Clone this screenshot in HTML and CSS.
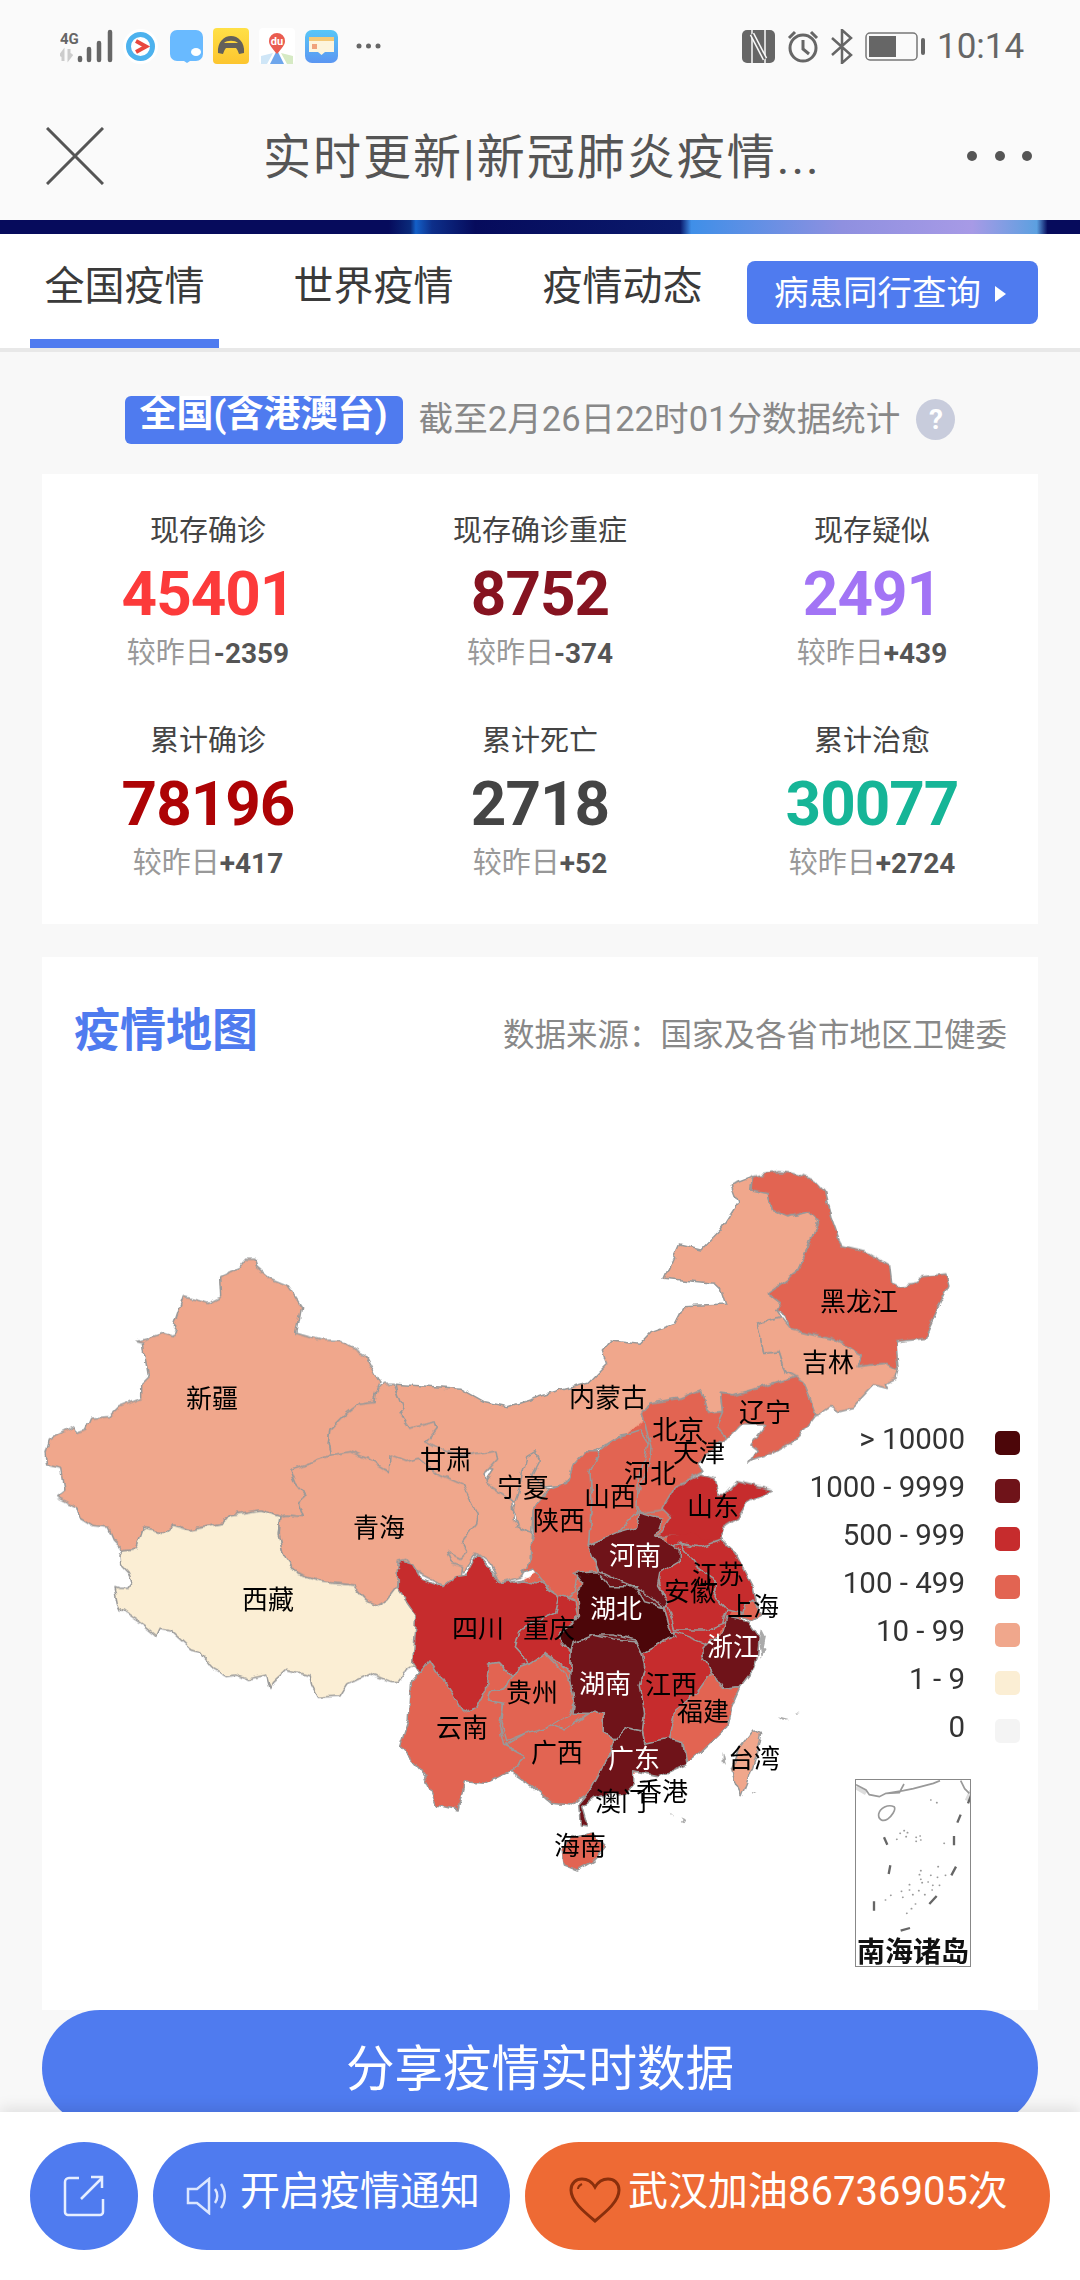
FILE: index.html
```html
<!DOCTYPE html>
<html lang="zh-CN">
<head>
<meta charset="utf-8">
<title>实时更新|新冠肺炎疫情</title>
<link rel="stylesheet" href="styles.css">
</head>
<body>
<div class="page">
  <header class="status">
    <div class="status-left">
      <svg class="ico-signal" width="53" height="34" viewBox="0 0 53 34">
        <text x="0" y="15" class="sig-4g">4G</text>
        <path d="M3 32v-9l-3 4M9 20v9l3-4" fill="none" stroke="#ccc" stroke-width="3"/>
        <g stroke="#666" stroke-width="4.5" stroke-linecap="round"><path d="M20 31v-2M29 31V20M39 31V14M50 31V3"/></g>
      </svg>
      <svg class="ico-app" width="35" height="35" viewBox="0 0 35 35"><circle cx="17.5" cy="17.5" r="17.5" fill="#fff"/><circle cx="17.5" cy="17.5" r="12" fill="none" stroke="#4db2ee" stroke-width="5"/><path d="M13 12l10 5.500-10 5.500" fill="none" stroke="#e8483f" stroke-width="4"/></svg>
      <svg class="ico-app ico-chat" width="33" height="33" viewBox="0 0 33 33"><path d="M7 0h19a7 7 0 0 1 7 7v17a7 7 0 0 1-7 7h-6l-3 2-3-2H7a7 7 0 0 1-7-7V7a7 7 0 0 1 7-7z" fill="#69baff"/><ellipse cx="26" cy="22" rx="5" ry="4" fill="#fff"/></svg>
      <svg class="ico-app" width="36" height="36" viewBox="0 0 36 36"><defs><linearGradient id="yel" x1="0" y1="0" x2="0" y2="1"><stop offset="0" stop-color="#ffe046"/><stop offset="1" stop-color="#fcc52f"/></linearGradient></defs><rect width="36" height="36" rx="4" fill="url(#yel)"/><path d="M5 25c-1-11 6-17 13-17s14 6 13 17l-5 1c-1-3-2-5-3-6H13c-1 1-2 3-3 6z M11 15h14c-3-3-11-3-14 0z" fill="#63605a" fill-rule="evenodd"/></svg>
      <svg class="ico-app" width="36" height="36" viewBox="0 0 36 36"><rect width="36" height="36" rx="4" fill="#fff"/><path d="M2 28l12-3-6 11H2z" fill="#cfe6f7"/><path d="M34 28l-12-3 6 11h6z" fill="#d6eac4"/><path d="M18 22l-7 14h14z" fill="#6ea6ec"/><path d="M18 26c-5-6-8-9-8-13a8 8 0 0 1 16 0c0 4-3 7-8 13z" fill="#ea5c50"/><text x="18" y="17" class="du">du</text></svg>
      <svg class="ico-app" width="33" height="33" viewBox="0 0 33 33"><defs><linearGradient id="cal" x1="0" y1="0" x2="0" y2="1"><stop offset="0" stop-color="#58c6f7"/><stop offset="1" stop-color="#5b96f2"/></linearGradient></defs><rect width="33" height="33" rx="7" fill="url(#cal)"/><rect x="4" y="7" width="25" height="15" fill="#fdf5dd"/><rect x="4" y="7" width="25" height="4" fill="#f4c978"/><rect x="7" y="14" width="5" height="5" fill="#f0a37c"/><path d="M13 22h7l-3.500 3z" fill="#fdf5dd"/></svg>
      <svg class="ico-more" width="25" height="6" viewBox="0 0 25 6" fill="#666"><circle cx="3" cy="3" r="2.500"/><circle cx="12.500" cy="3" r="2.500"/><circle cx="22" cy="3" r="2.500"/></svg>
    </div>
    <div class="status-right">
      <svg width="33" height="33" viewBox="0 0 33 33"><rect width="33" height="33" rx="5" fill="#666"/><path d="M10 0v33M23 0v33" stroke="#fafafa" stroke-width="1.500"/><path d="M10 4l13 25" fill="none" stroke="#fafafa" stroke-width="5"/><path d="M10 4l13 25" fill="none" stroke="#666" stroke-width="2"/></svg>
      <svg width="32" height="34" viewBox="0 0 32 34" fill="none" stroke="#666" stroke-width="3"><circle cx="16" cy="19" r="13"/><path d="M16 11v9l6 5M2 9l6-6M30 9l-6-6"/></svg>
      <svg width="22" height="35" viewBox="0 0 22 35" fill="none" stroke="#666" stroke-width="2.500"><path d="M1 9l19 17-9 8V1l9 8L1 26"/></svg>
      <svg width="60" height="29" viewBox="0 0 60 29"><rect x="1" y="1" width="51" height="27" rx="4" fill="none" stroke="#777" stroke-width="1.500"/><rect x="4" y="4" width="27" height="21" fill="#666"/><rect x="56" y="6" width="4" height="17" rx="2" fill="#666"/></svg>
      <span class="clock">10:14</span>
    </div>
  </header>

  <div class="titlebar">
    <svg class="close" width="58" height="58" viewBox="0 0 58 58"><path d="M1 1l56 56M57 1L1 57" stroke="#555" stroke-width="3"/></svg>
    <h1 class="title">实时更新|新冠肺炎疫情...</h1>
    <svg class="more" width="66" height="12" viewBox="0 0 66 12" fill="#555"><circle cx="5" cy="6" r="5"/><circle cx="33" cy="6" r="5"/><circle cx="60" cy="6" r="5"/></svg>
  </div>

  <div class="banner"></div>

  <nav class="tabs">
    <a class="tab tab-active">全国疫情</a>
    <a class="tab">世界疫情</a>
    <a class="tab">疫情动态</a>
    <a class="peer-btn">病患同行查询<i class="tri"></i></a>
  </nav>

  <div class="scope">
    <span class="scope-tag">全国(含港澳台)</span>
    <span class="scope-time">截至2月26日22时01分数据统计</span>
    <span class="help">?</span>
  </div>

  <section class="stats">
    <div class="stat"><div class="stat-label">现存确诊</div><div class="stat-num c-red">45401</div><div class="stat-delta">较昨日<b>-2359</b></div></div>
    <div class="stat"><div class="stat-label">现存确诊重症</div><div class="stat-num c-wine">8752</div><div class="stat-delta">较昨日<b>-374</b></div></div>
    <div class="stat"><div class="stat-label">现存疑似</div><div class="stat-num c-purple">2491</div><div class="stat-delta">较昨日<b>+439</b></div></div>
    <div class="stat"><div class="stat-label">累计确诊</div><div class="stat-num c-dark">78196</div><div class="stat-delta">较昨日<b>+417</b></div></div>
    <div class="stat"><div class="stat-label">累计死亡</div><div class="stat-num c-gray">2718</div><div class="stat-delta">较昨日<b>+52</b></div></div>
    <div class="stat"><div class="stat-label">累计治愈</div><div class="stat-num c-green">30077</div><div class="stat-delta">较昨日<b>+2724</b></div></div>
  </section>

  <section class="mapcard">
    <div class="map-head">
      <h2 class="map-title">疫情地图</h2>
      <span class="map-source">数据来源&#xFF1A;国家及各省市地区卫健委</span>
    </div>
    <div class="map-area">
      <svg class="map" width="996" height="909" viewBox="42 1101 996 909">
        <defs>
          <filter id="rough" filterUnits="userSpaceOnUse" x="42" y="1101" width="996" height="909" color-interpolation-filters="sRGB">
            <feTurbulence type="fractalNoise" baseFrequency=".09" numOctaves="2" seed="4" result="n"/>
            <feDisplacementMap in="SourceGraphic" in2="n" scale="7" xChannelSelector="R" yChannelSelector="G"/>
          </filter>
        </defs>
        <g filter="url(#rough)">
        <g transform="translate(380 1150) scale(.43365 .33333)">
          <polygon class="l2" points="35,703 185,715 240,755 295,770 420,720 480,700 525,640 515,600 535,570 600,580 625,545 680,520 700,470 800,465 790,425 770,400 655,385 690,285 740,300 785,240 825,160 810,105 860,80 855,120 895,130 905,180 940,200 985,185 1010,215 985,300 960,370 895,430 925,460 915,480 925,500 870,520 885,610 920,605 935,665 960,680 870,715 815,735 785,730 790,785 755,790 740,720 690,745 620,760 605,790 615,840 555,855 500,900 460,935 425,1005 385,1010 345,1000 310,1060 240,1000 260,960 100,950 60,850"/>
        </g>
        <g transform="translate(30 1150) scale(.33333)">
          <polygon class="l2" points="650,325 672,325 680,350 720,385 770,405 795,440 815,470 800,550 870,570 930,572 1005,615 1050,700 1040,725 1035,755 990,760 950,790 900,840 895,880 902,915 860,930 780,960 795,1000 828,1040 805,1060 820,1100 770,1095 750,1100 690,1080 600,1095 580,1120 480,1140 430,1125 400,1150 340,1135 320,1195 280,1200 250,1170 235,1135 190,1130 150,1105 140,1070 80,1040 105,1020 95,955 50,945 45,905 55,870 130,830 140,850 170,840 185,805 240,800 270,770 335,745 335,700 355,680 345,620 340,580 320,575 400,550 430,560 440,545 430,530 460,440 535,460 575,440 572,380 625,355"/>
          <polygon class="l1" points="280,1200 320,1195 340,1135 400,1150 430,1125 480,1140 580,1120 600,1095 690,1080 750,1100 745,1150 760,1215 800,1270 870,1295 970,1305 1010,1350 1045,1365 1070,1350 1100,1310 1130,1320 1160,1380 1300,1400 1300,1500 1210,1510 1130,1560 1105,1595 1080,1595 1020,1570 950,1605 930,1638 865,1642 845,1605 840,1575 770,1558 730,1595 720,1615 710,1575 650,1588 620,1575 590,1580 555,1560 540,1545 510,1505 480,1495 420,1440 390,1435 380,1458 340,1425 310,1405 275,1380 265,1360 255,1310 270,1315 290,1315 305,1295 295,1270 272,1245 270,1215"/>
          <polygon class="l2" points="1040,725 1060,703 1090,703 1120,780 1110,790 1140,835 1215,815 1222,835 1190,875 1250,905 1310,915 1395,900 1400,930 1365,970 1370,1000 1445,1050 1450,1110 1480,1140 1505,1150 1500,1230 1475,1280 1410,1300 1380,1240 1340,1210 1300,1270 1270,1240 1100,1240 1080,960 902,915 895,880 900,840 950,790 990,760 1035,755"/>
          <polygon class="l2" points="902,915 960,905 1010,925 1078,965 1080,915 1130,935 1165,925 1220,970 1300,1005 1345,1095 1340,1120 1295,1175 1310,1205 1290,1225 1250,1205 1265,1240 1295,1250 1290,1290 1240,1310 1210,1290 1170,1270 1130,1225 1105,1230 1100,1310 1070,1350 1045,1365 1010,1350 970,1305 870,1295 800,1270 760,1215 745,1150 750,1100 770,1095 820,1100 805,1060 828,1040 795,1000 780,960 860,930"/>
        </g>
        <g transform="translate(380 1500) scale(.43365 .33333)">
          <polygon class="under l3" points="100,300 300,260 480,135 500,-130 620,-250 690,-60 660,120 790,150 840,300 820,520 720,720 640,800 520,850 400,880 330,800 200,830 110,760 90,600"/>
        </g>
        <g transform="translate(380 1150) scale(.43365 .33333)">
          <polygon class="l3" points="860,80 920,65 945,68 1000,90 1025,125 1040,200 1065,290 1130,310 1175,345 1180,400 1195,410 1240,400 1250,380 1305,372 1312,405 1285,480 1255,565 1190,575 1195,660 1165,640 1100,650 1110,615 1050,570 950,540 930,490 915,480 925,460 895,430 960,370 985,300 1010,215 985,185 940,200 905,180 895,130 855,120"/>
          <polygon class="l2" points="870,520 925,500 950,540 1050,570 1110,615 1100,650 1165,640 1195,660 1190,685 1165,700 1170,715 1140,705 1090,775 1060,785 1040,770 1005,800 990,740 975,695 935,665 920,605 885,610"/>
          <polygon class="l3" points="960,680 975,695 990,740 1005,795 985,830 945,880 905,910 860,930 848,942 870,900 855,885 890,825 830,825 800,865 775,830 790,785 785,730 815,735 870,715"/>
          <polygon class="l3" points="605,790 620,760 690,745 740,720 755,790 790,785 775,830 800,865 760,900 735,945 745,965 680,1010 650,1080 600,1090 590,1060 600,1010 620,950 625,890 615,845"/>
          <polygon class="l4" points="740,975 770,985 780,1030 800,1030 825,995 905,1020 845,1060 825,1105 795,1130 785,1170 740,1190 690,1160 640,1160 670,1100 650,1075 680,1010"/>
        </g>
        <g transform="translate(490 1400) scale(.33333)">
          <polygon class="l2" points="135,155 148,180 125,225 175,270 130,330 125,400 85,380 70,330 75,310 80,290 100,210 110,170"/>
          <polygon class="l3" points="330,150 375,115 450,90 475,130 465,170 445,240 440,335 380,400 295,435 305,300 300,215"/>
          <polygon class="l3" points="285,155 330,155 300,215 305,300 295,435 330,530 265,520 255,575 215,600 200,580 170,560 130,510 95,520 125,470 120,440 130,400 130,330 175,270 230,250 250,195"/>
        </g>
        <g transform="translate(380 1500) scale(.43365 .33333)">
          <polygon class="under l4" points="660,110 720,100 790,140 830,300 780,400 750,480 680,620 650,700 620,720 600,480 640,300"/>
          <polygon class="under l5" points="500,220 600,90 640,230 650,340 640,420 600,600 590,670 540,700 520,640 460,620 460,440 470,300"/>
          <polygon class="l4" points="690,130 740,140 785,120 820,160 840,210 860,260 870,320 860,345 800,330 770,290 775,240 730,200"/>
          <polygon class="l4" points="640,170 690,130 730,200 775,240 770,290 800,330 790,370 750,390 680,390 660,310 640,230"/>
          <polygon class="l4" points="605,460 660,420 680,395 750,430 745,470 765,515 730,580 680,630 665,720 610,730 605,690 610,640 600,560 610,500"/>
          <polygon class="l3" points="840,320 862,300 878,345 855,362 835,350"/>
          <polygon class="l5" points="595,35 650,55 635,110 690,145 690,185 645,220 640,255 665,310 655,320 600,270 545,240 505,215 480,135 550,95 590,80"/>
          <polygon class="l5" points="800,350 850,365 875,410 870,470 860,510 830,560 790,565 765,515 745,470 745,440 790,400"/>
          <polygon class="l3" points="765,515 790,565 830,560 810,620 800,680 740,755 710,785 700,725 665,720 680,630 730,580"/>
          <polygon class="l3" points="290,735 350,690 390,670 425,690 480,640 515,640 515,700 540,720 520,800 490,870 440,915 395,910 350,860 300,815 335,770"/>
          <polygon class="l5" points="610,730 665,715 700,725 708,790 640,830 585,815 585,850 565,880 495,890 465,920 478,978 462,975 458,910 490,860 515,800 530,770 540,720 570,680 605,690"/>
          <polygon class="l5" points="445,430 490,405 540,420 590,425 605,460 610,500 600,560 610,640 605,690 570,680 540,720 515,700 515,640 480,640 445,640 450,600 440,540 440,460"/>
          <polygon class="l3" points="115,480 170,590 190,635 225,620 245,570 250,495 275,490 305,530 290,570 255,575 250,600 285,610 275,680 285,735 335,770 300,815 240,850 195,845 180,930 130,915 105,830 80,790 45,740 65,660 70,550 90,520"/>
          <polygon class="l3" points="325,490 345,490 380,460 440,540 450,600 440,640 390,680 345,695 290,725 280,680 285,610 250,600 255,575 290,570 305,530"/>
          <polygon class="l4" points="40,210 50,180 75,190 95,235 145,260 175,230 200,225 225,165 255,210 280,250 330,240 370,250 410,285 415,305 405,340 350,370 320,395 310,440 345,490 320,500 305,530 275,490 250,495 245,570 225,620 190,635 170,590 115,480 90,520 75,490 85,350 40,265"/>
          <polygon class="l4" points="415,285 450,300 455,345 445,370 415,395 420,425 440,455 440,515 380,460 345,490 310,440 320,395 350,370 405,340"/>
          <polygon class="l6" points="450,220 500,215 530,260 590,260 610,305 655,320 665,370 680,410 660,420 605,460 590,420 540,405 490,405 445,430 440,455 420,425 415,395 445,370 460,345 455,270 470,255"/>
          <polygon class="l3" points="420,1050 440,1010 490,1000 520,1040 490,1085 455,1110 425,1095"/>
          <polygon class="l2" points="860,690 880,700 870,760 850,840 835,890 820,850 810,810 830,740"/>
          <path class="isle" d="M920 652l25 8-14 2zM958 634l10 2-8 2zM790 755l8 40-8-12zM855 875l12 8-10-2zM670 935l6 8-6-2zM695 952l10 6-5 12-4-4 4-6zM880 385l10 25-5 30 5 5-10 25-5-40z"/>
        </g>
        </g>
        <g class="labels">
          <text x="212" y="1399">新疆</text>
          <text x="379" y="1528">青海</text>
          <text x="268" y="1600">西藏</text>
          <text x="446" y="1460">甘肃</text>
          <text x="523" y="1488">宁夏</text>
          <text x="559" y="1521">陕西</text>
          <text x="608" y="1398">内蒙古</text>
          <text x="859" y="1302">黑龙江</text>
          <text x="828" y="1363">吉林</text>
          <text x="765" y="1413">辽宁</text>
          <text x="678" y="1430">北京</text>
          <text x="699" y="1453">天津</text>
          <text x="650" y="1474">河北</text>
          <text x="610" y="1497">山西</text>
          <text x="713" y="1507">山东</text>
          <text class="lt" x="635" y="1556">河南</text>
          <text x="718" y="1575">江苏</text>
          <text x="690" y="1592">安徽</text>
          <text x="753" y="1607">上海</text>
          <text class="lt" x="616" y="1609">湖北</text>
          <text x="478" y="1629">四川</text>
          <text x="549" y="1629">重庆</text>
          <text class="lt" x="733" y="1647">浙江</text>
          <text class="lt" x="605" y="1684">湖南</text>
          <text x="671" y="1685">江西</text>
          <text x="532" y="1693">贵州</text>
          <text x="703" y="1712">福建</text>
          <text x="462" y="1728">云南</text>
          <text x="557" y="1753">广西</text>
          <text class="lt" x="634" y="1759">广东</text>
          <text x="754" y="1759">台湾</text>
          <text x="662" y="1792">香港</text>
          <text x="621" y="1802">澳门</text>
          <text x="580" y="1846">海南</text>
        </g>
      </svg>
      <ul class="legend">
        <li><span>&gt; 10000</span><i class="sw l6"></i></li>
        <li><span>1000 - 9999</span><i class="sw l5"></i></li>
        <li><span>500 - 999</span><i class="sw l4"></i></li>
        <li><span>100 - 499</span><i class="sw l3"></i></li>
        <li><span>10 - 99</span><i class="sw l2"></i></li>
        <li><span>1 - 9</span><i class="sw l1"></i></li>
        <li><span>0</span><i class="sw l0"></i></li>
      </ul>
      <div class="inset">
        <svg class="inset-map" width="114" height="160" viewBox="46 28 342 480">
          <path class="in-shade" d="M46 50l30 18M392 60l-14 30"/>
          <path class="in-line" d="M46 42l30 16 10 14 30 6 20-10 40-2 14-26M138 68l50-8 30-6 60-16 20-8M360 30l12 24 14 14"/>
          <path class="in-line" d="M114 130c4-18 28-30 46-22 8 8-8 30-20 38-14 8-28 0-26-16z"/>
          <path class="in-dash" d="M350 156l10-24M130 200l10 22M340 196v28M149 284l-5 26M346 288l-14 26M100 392v28M288 376l-22 24M180 480l28-8M392 72l-10 26"/>
          <path class="in-dots" d="M178 188h1M190 180h1M200 186h1M168 206h1M196 198h1M226 200h1M238 196h1M226 212h1M240 208h1M310 218h1M270 88h1M288 96h1M240 300h1M236 312h1M292 288h1M270 314h1M290 320h1M314 314h1M240 326h1M206 342h1M244 336h1M262 334h1M276 344h1M296 344h1M206 358h1M234 360h1M182 362h1M252 372h1M274 358h1M216 372h1M186 380h1M150 374h1M134 388h1M224 400h1M212 414h1M198 428h1"/>
        </svg>
        <span class="inset-name">南海诸岛</span>
      </div>
    </div>
  </section>

  <button class="share"><span class="share-text">分享疫情实时数据</span></button>

  <footer class="bottombar">
    <a class="fbtn fbtn-icon">
      <svg width="42" height="42" viewBox="0 0 42 42" fill="none" stroke="#e6eeff" stroke-width="2.500"><path d="M16 3H6a4 4 0 0 0-4 4v30a3 3 0 0 0 3 3h32a3 3 0 0 0 3-3V24"/><path d="M18 24L39 3M28 2h11v11"/></svg>
    </a>
    <a class="fbtn fbtn-notify">
      <svg width="44" height="38" viewBox="0 0 44 38" fill="none" stroke="#dbe6ff" stroke-width="2.500"><path d="M2 12h9L23 2v34L11 26H2z"/><path d="M29 12c3 4 3 10 0 14M35 7c5 7 5 17 0 24"/></svg>
      <span class="fbtn-text">开启疫情通知</span>
    </a>
    <a class="fbtn fbtn-cheer">
      <svg class="heart" width="52" height="46" viewBox="0 0 52 46" fill="none" stroke="#8a2f0c" stroke-width="3"><path d="M26 44C14 34 2 24 2 13 2 6 7 2 13 2c6 0 10 3 13 8 3-5 7-8 13-8 6 0 11 4 11 11 0 11-12 21-24 31z"/><path d="M9 12c0-3 2-4 4-5" stroke-width="2"/></svg>
      <span class="fbtn-text">武汉加油86736905次</span>
    </a>
  </footer>
</div>
</body>
</html>
```
FILE: styles.css
```css
* { box-sizing: border-box; }
html, body { margin: 0; padding: 0; }
body { font-family: Roboto, "Noto Sans CJK SC", sans-serif; background: #f8f8f8; }
ul { list-style: none; margin: 0; padding: 0; }
h1, h2 { margin: 0; font-weight: 400; }
.page { position: relative; width: 1080px; height: 2280px; overflow: hidden; }

.status { height: 92px; background: #fafafa; display: flex; justify-content: space-between; align-items: center; padding: 0 55px 0 60px; }
.status-left { display: flex; align-items: center; gap: 10px; }
.status-right { display: flex; align-items: center; gap: 12px; }
.sig-4g { font: 700 15px Roboto, sans-serif; fill: #666; }
.du { font: 700 11px Roboto, sans-serif; fill: #fff; text-anchor: middle; }
.ico-chat { margin-left: 2px; }
.ico-more { margin-left: 8px; }
.clock { font-size: 35px; color: #666; width: 88px; }

.titlebar { height: 128px; background: #fafafa; display: flex; align-items: center; padding: 0 47px 0 46px; }
.close { flex: none; }
.title { flex: 1; margin: -6px 0 0 159px; font-size: 48px; letter-spacing: 2px; color: #555; white-space: nowrap; }
.more { flex: none; }

.banner { height: 14px; background: linear-gradient(90deg, #060b5c 0 36%, #0a2a7a 38%, #1460c8 38.500%, #0d2f8a 40%, #060b5c 44%, #0a1a6c 63%, #3f8fe8 64%, #8f90e0 78%, #a79ae6 90%, #5ca0e0 96%, #060b5c 97%); }

.tabs { height: 118px; background: #fff; border-bottom: 4px solid #e8e8e8; display: flex; padding-left: 30px; gap: 60px; position: relative; }
.tab { width: 189px; height: 114px; font-size: 40px; line-height: 106px; text-align: center; color: #3a3a3a; }
.tab-active { border-bottom: 9px solid #4f7bef; }
.peer-btn { position: absolute; left: 747px; top: 27px; width: 291px; height: 63px; background: #4f7bef; border-radius: 8px; color: #fff; font-size: 34.500px; line-height: 63px; padding: 2px 0 0 27px; display: flex; align-items: center; }
.tri { width: 0; height: 0; margin-left: 14px; border-left: 11px solid #fff; border-top: 8px solid transparent; border-bottom: 8px solid transparent; }

.scope { height: 122px; padding-top: 44px; display: flex; justify-content: center; align-items: flex-start; gap: 16px; }
.scope-tag { width: 278px; height: 48px; background: #4f7bef; border-radius: 6px; color: #fff; font-size: 37px; font-weight: 700; line-height: 37px; text-align: center; white-space: nowrap; }
.scope-time { font-size: 34.600px; line-height: 46px; color: #888; white-space: nowrap; }
.help { width: 39px; height: 41px; border-radius: 50%; background: #c8ccdc; color: #fff; font-size: 28px; font-weight: 700; line-height: 41px; text-align: center; margin-top: 3px; }

.stats { margin: 0 42px; height: 450px; background: #fff; padding-top: 37px; display: grid; grid-template-columns: repeat(3, 1fr); grid-auto-rows: 161px; row-gap: 49px; text-align: center; }
.stat-label { height: 40px; line-height: 40px; font-size: 29px; color: #444; }
.stat-num { height: 70px; line-height: 70px; margin-top: 8px; font-size: 62px; letter-spacing: -1px; font-weight: 700; }
.stat-delta { height: 36px; line-height: 36px; margin-top: 6px; font-size: 29px; color: #999; }
.stat-delta b { color: #555; font-size: 28px; }
.c-red { color: #fc3a3a; }
.c-wine { color: #861320; }
.c-purple { color: #a274f5; }
.c-dark { color: #ad0305; }
.c-gray { color: #444; }
.c-green { color: #16b597; }

.mapcard { margin: 33px 42px 0; height: 1053px; background: #fff; }
.map-head { height: 144px; display: flex; justify-content: space-between; align-items: center; padding: 0 31px 0 32px; }
.map-title { font-size: 46px; font-weight: 700; color: #4f7bef; margin-top: -6px; }
.map-source { font-size: 31.500px; color: #888; margin-top: 6px; white-space: nowrap; }
.map-area { position: relative; height: 909px; }
.map { display: block; }
.map polygon { stroke: #999; stroke-width: 1.500; stroke-linejoin: round; vector-effect: non-scaling-stroke; }
.map polygon.under { stroke: none; }
.isle { fill: #aaa; }
.labels text { font-size: 26px; fill: #000; text-anchor: middle; dominant-baseline: central; }
.labels .lt { fill: #fff; }

.l6 { fill: #4c0609; background: #4c0609; }
.l5 { fill: #6f1319; background: #6f1319; }
.l4 { fill: #c62c2d; background: #c62c2d; }
.l3 { fill: #e26452; background: #e26452; }
.l2 { fill: #f0a78c; background: #f0a78c; }
.l1 { fill: #fbeed4; background: #fbeed4; }
.l0 { background: #f4f4f4; }

.legend { position: absolute; right: 18px; top: 318px; }
.legend li { height: 48px; display: flex; justify-content: flex-end; align-items: center; gap: 30px; font-size: 29.500px; color: #333; }
.legend span { margin-top: -8px; }
.sw { width: 25px; height: 24px; border-radius: 5px; display: block; }

.inset { position: absolute; left: 813px; top: 678px; width: 116px; height: 188px; border: 1.500px solid #888; background: #fff; display: flex; flex-direction: column; align-items: center; }
.inset-map { flex: none; }
.inset-name { font-size: 28px; line-height: 26px; font-weight: 700; color: #111; white-space: nowrap; }
.in-shade { fill: none; stroke: #ddd; stroke-width: 12; }
.in-line { fill: none; stroke: #999; stroke-width: 5; }
.in-dash { fill: none; stroke: #666; stroke-width: 7; }
.in-dots { fill: none; stroke: #999; stroke-width: 5; stroke-linecap: round; }

.share { display: block; width: 996px; height: 116px; margin: 0 42px; border: 0; border-radius: 58px; background: #4f7bef; color: #fff; font: 48.500px Roboto, "Noto Sans CJK SC", sans-serif; padding: 0; }
.share-text { display: block; margin-top: -6px; }

.bottombar { position: absolute; left: 0; right: 0; bottom: 0; height: 168px; background: #fff; box-shadow: 0 -4px 14px rgba(0, 0, 0, .1); padding: 30px 30px 0; display: flex; gap: 15px; }
.fbtn { height: 108px; border-radius: 54px; display: flex; align-items: center; color: #fff; font-size: 40px; white-space: nowrap; }
.fbtn-text { margin-top: -16px; }
.fbtn-icon { width: 108px; background: #4f7bef; justify-content: center; }
.fbtn-notify { width: 357px; background: #4f7bef; padding-left: 33px; gap: 10px; }
.fbtn-cheer { width: 525px; background: #ee6a34; padding-left: 44px; gap: 7px; }
.heart { margin-top: 8px; }
```
